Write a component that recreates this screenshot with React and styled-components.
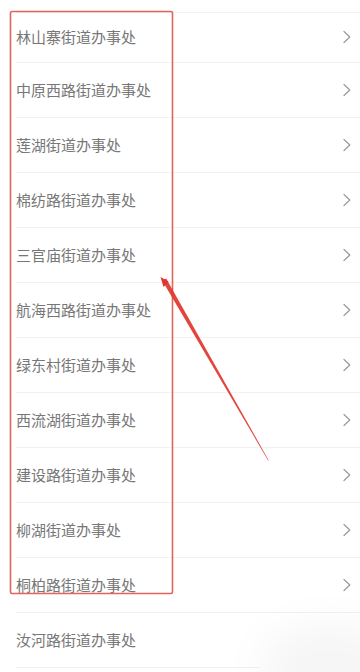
import React from "react";
import styled, { createGlobalStyle } from "styled-components";

const Global = createGlobalStyle`
  html, body { margin: 0; padding: 0; background: #ffffff; }
  body { font-family: "Noto Sans CJK SC", "Noto Sans", sans-serif; }
`;

const Page = styled.div`
  position: relative;
  width: 360px;
  height: 672px;
  overflow: hidden;
  background: #fff;
`;

const List = styled.ul`
  list-style: none;
  margin: 0;
  padding: 12px 0 0 0;
`;

const TopLine = styled.div`
  height: 1px;
  margin-left: 16px;
  background: #f3f3f3;
`;

const Row = styled.li`
  display: flex;
  align-items: center;
  justify-content: space-between;
  box-sizing: border-box;
  height: ${(p) => (p.$first ? "50px" : "55px")};
  padding: ${(p) => (p.$first ? "0 9px 3px 16px" : "0 9px 1px 16px")};
  position: relative;
  &::after {
    content: "";
    position: absolute;
    left: 16px;
    right: ${(p) => (p.$last ? "100px" : "0")};
    bottom: 0;
    height: 1px;
    background: #f2f2f2;
  }
`;

const Label = styled.span`
  font-size: 15px;
  line-height: 20px;
  color: #777777;
`;

const Chevron = styled.svg`
  width: 8px;
  height: 14px;
  flex: none;
`;

const Annotation = styled.svg`
  position: absolute;
  left: 0;
  top: 0;
  width: 360px;
  height: 672px;
  pointer-events: none;
`;

const Shade = styled.div`
  position: absolute;
  right: -40px;
  bottom: -40px;
  width: 140px;
  height: 90px;
  border-radius: 50%;
  background: rgba(0, 0, 0, 0.035);
  filter: blur(18px);
  pointer-events: none;
`;

const items = [
  "林山寨街道办事处",
  "中原西路街道办事处",
  "莲湖街道办事处",
  "棉纺路街道办事处",
  "三官庙街道办事处",
  "航海西路街道办事处",
  "绿东村街道办事处",
  "西流湖街道办事处",
  "建设路街道办事处",
  "柳湖街道办事处",
  "桐柏路街道办事处",
  "汝河路街道办事处",
];

export default function App() {
  return (
    <Page>
      <Global />
      <List>
        <TopLine />
        {items.map((t, i) => (
          <Row key={t} $first={i === 0} $last={i === items.length - 1}>
            <Label>{t}</Label>
            {i < items.length - 1 && (
              <Chevron viewBox="0 0 8 14">
                <path d="M1 1.5 L6.8 7 L1 12.5" fill="none" stroke="#9a9a9a" strokeWidth="1.2" strokeLinecap="round" strokeLinejoin="round" />
              </Chevron>
            )}
          </Row>
        ))}
      </List>
      <Shade />
      <Annotation viewBox="0 0 360 672">
        <rect x="10.5" y="11.5" width="162" height="582" rx="1.5" fill="none" stroke="#e0645c" strokeWidth="1.6" />
        <polygon points="162.3,280.8 166.2,278.4 268.6,460.2 268.1,460.4" fill="#e0352b" opacity="0.92" />
        <polygon points="160.5,277 168.5,281.5 163.5,287" fill="#e0352b" />
      </Annotation>
    </Page>
  );
}
